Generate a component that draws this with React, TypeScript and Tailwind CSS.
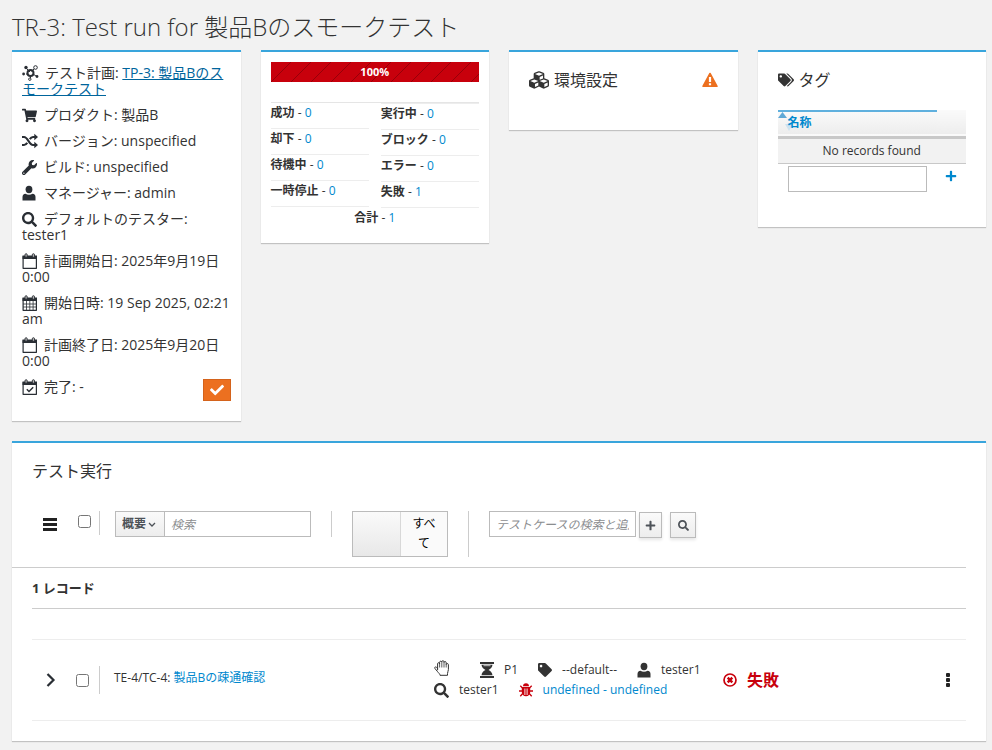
import { useState } from "react";
import type { ReactNode } from "react";
import { FaCheck, FaCubes, FaPlus, FaSearch, FaShoppingCart, FaTag, FaTags, FaWrench } from "react-icons/fa";

function PlanIcon() {
  return (
    <svg viewBox="0 0 17 16" className="h-4 w-[17px]" aria-hidden="true">
      <path d="M5 4 8 7M12 4 9.500 6.500M4 9h2M11 9l3 2M8.500 11v2" stroke="currentColor" strokeWidth="1" />
      <circle cx="8.500" cy="8" r="3" fill="none" stroke="currentColor" strokeWidth="2" />
      <circle cx="4" cy="2.500" r="1.700" fill="currentColor" />
      <circle cx="13.500" cy="2.500" r="1.800" fill="none" stroke="currentColor" />
      <circle cx="1.600" cy="9" r="1.400" fill="currentColor" />
      <circle cx="15" cy="11.500" r="1.400" fill="currentColor" />
      <circle cx="7.800" cy="14.200" r="1.200" fill="none" stroke="currentColor" />
    </svg>
  );
}

function ShuffleIcon() {
  return (
    <svg viewBox="0 0 16 16" className="h-4 w-4" aria-hidden="true">
      <path
        d="M0 4h2c4 0 5 8 9 8h2M0 12h2c1.500 0 2.500-1 3.200-2.200M7.800 6.200C8.600 5 9.500 4 11 4h2"
        fill="none"
        stroke="currentColor"
        strokeWidth="2.200"
      />
      <path d="M12.300.8 16 4l-3.700 3.200zM12.300 8.800 16 12l-3.700 3.200z" fill="currentColor" />
    </svg>
  );
}

function UserIcon() {
  return (
    <svg viewBox="0 0 14 16" className="h-4 w-[14px]" aria-hidden="true">
      <ellipse cx="7" cy="4.500" rx="3.400" ry="3.700" fill="currentColor" />
      <path d="M.5 15.500V12c0-2 1-3 3-3.200C4.500 9.400 5.600 9.700 7 9.700s2.500-.3 3.500-.9c2 .2 3 1.200 3 3.200v3.500z" fill="currentColor" />
    </svg>
  );
}

function CalendarIcon({ kind }: { kind: "blank" | "grid" | "check" }) {
  return (
    <svg viewBox="0 0 16 16" className="h-4 w-4" aria-hidden="true">
      <path d="M1.100 3.500h13.300v11.800H1.100z" fill="none" stroke="currentColor" strokeWidth="1.200" strokeLinejoin="round" />
      <path d="M.5 2.500H15V6H.5z" fill="currentColor" />
      <rect x="3" y=".7" width="2.200" height="3.600" rx="1.100" fill="#bbb" stroke="currentColor" strokeWidth=".9" />
      <rect x="10.300" y=".7" width="2.200" height="3.600" rx="1.100" fill="#bbb" stroke="currentColor" strokeWidth=".9" />
      {kind === "grid" && (
        <path d="M4.500 6v9M7.800 6v9M11.100 6v9M1 9h13M1 12h13" stroke="currentColor" strokeWidth=".8" />
      )}
      {kind === "check" && <path d="m4.800 10.300 2.200 2.200 4.200-4.300" fill="none" stroke="currentColor" strokeWidth="1.400" />}
    </svg>
  );
}

function HandIcon() {
  return (
    <svg viewBox="0 0 16 16" className="h-4 w-4 shrink-0" aria-hidden="true">
      <path
        d="M3.600 10.200V3.800c0-1.500 2-1.500 2 0V2.300c0-1.500 2.200-1.500 2.200 0v-.5c0-1.500 2.200-1.500 2.200 0v.8c0-1.400 2.200-1.400 2.200 0v2c0-1.400 2.200-1.400 2.200 0v5c0 1.500-.9 2.300-.9 4v1.700H6c0-1.500-1.500-2.300-2.400-3.600L1 8.600C0 7.200 1.700 6.300 2.700 7.500l.9 1.200"
        fill="none"
        stroke="currentColor"
        strokeWidth="1"
      />
      <path d="M5.600 3.500v4M7.800 2.500v5M10 2.800v4.700M12.200 4.500v3" stroke="currentColor" strokeWidth=".8" />
    </svg>
  );
}

function HourglassIcon() {
  return (
    <svg viewBox="0 0 14 16" className="h-4 w-[14px]" aria-hidden="true">
      <path d="M0 0h14v2H0zM0 14h14v2H0zM1.500 2.800h11C12.300 5.500 10.500 7 8.500 8c2 1 3.800 2.500 4 5.300h-11C1.700 10.500 3.500 9 5.500 8c-2-1-3.800-2.500-4-5.200z" fill="currentColor" />
      <path d="M3.500 3.700h7" stroke="#fff" strokeWidth=".7" />
    </svg>
  );
}

function BugIcon() {
  return (
    <svg viewBox="0 0 14 14" className="h-[14px] w-[14px]" aria-hidden="true">
      <path d="M4 3.300C4 1.500 5.200.3 7 .3s3 1.200 3 3z" fill="currentColor" />
      <path d="M2.800 4h8.400v5c0 2.400-1.700 4.200-4.200 4.200S2.800 11.400 2.800 9z" fill="currentColor" />
      <path d="M3.500 5 1.300 2.800M10.500 5l2.200-2.200M0 8h3.500M10.500 8H14M3.700 10.500l-2.400 2.700M10.300 10.500l2.400 2.700" stroke="currentColor" strokeWidth="1.300" />
      <path d="M5.900 5.500v6.500M8.100 5.500v6.500" stroke="#fff" strokeWidth=".9" />
    </svg>
  );
}

function WarningIcon() {
  return (
    <svg viewBox="0 0 16 16" className="h-4 w-4" aria-hidden="true">
      <path d="M8 1.500 15 14.300H1z" fill="currentColor" stroke="currentColor" strokeWidth="1.600" strokeLinejoin="round" />
      <path d="M6.900 5h2.200v5H6.900zM6.900 11.200h2.200v2H6.900z" fill="#fff" />
    </svg>
  );
}

function FailedIcon() {
  return (
    <svg viewBox="0 0 14 14" className="h-[14px] w-[14px]" aria-hidden="true">
      <circle cx="7" cy="7" r="6" fill="none" stroke="currentColor" strokeWidth="1.700" />
      <path d="m4.700 4.700 4.600 4.600M9.300 4.700 4.700 9.300" stroke="currentColor" strokeWidth="2.400" />
    </svg>
  );
}

const card = "border-t-2 border-[#39a5dc] bg-white shadow-[0_1px_1px_rgba(3,3,3,0.2)]";
const field = "h-[26px] border border-[#bbb] bg-white px-[6px] text-[12px] placeholder:italic placeholder:text-[#8b8d8f] outline-none";
const smallButton =
  "flex h-[26px] items-center justify-center border border-[#bbb] bg-linear-to-b from-[#fafafa] to-[#ededed] text-[#4d5258] shadow-[0_2px_3px_rgba(3,3,3,0.1)]";

function Info({ icon, children }: { icon: ReactNode; children: ReactNode }) {
  return (
    <p>
      <span className="mr-[6px] inline-flex h-4 min-w-4 items-center align-top text-[15px] text-[#292e34]">{icon}</span>
      {children}
    </p>
  );
}

function Stat({ label, value }: { label: string; value: number }) {
  return (
    <li className="h-[26px] border-b border-[#ededed] text-[12px] leading-5">
      <b className="font-bold">{label}</b> -{" "}
      <a href="#stats" className="text-[#0088ce]">
        {value}
      </a>
    </li>
  );
}

function Meta({ icon, children }: { icon: ReactNode; children?: ReactNode }) {
  return (
    <span className="flex items-center gap-[10px]">
      <span className="flex min-w-[14px] justify-center text-[14px]">{icon}</span>
      {children}
    </span>
  );
}

export default function App() {
  const [all, setAll] = useState(true);
  return (
    <div className="min-h-screen bg-[#f2f2f2] pt-[9px] pr-[6px] pb-2 pl-3 font-['Open_Sans','Noto_Sans_CJK_JP',sans-serif] text-[12px] text-[#333]">
      <h1 className="mb-[5px] text-[24px] leading-9 font-light">TR-3: Test run for 製品Bのスモークテスト</h1>

      <div className="grid grid-cols-4 items-start gap-5">
        <section className={card + " flex flex-col gap-[10px] px-[10px] pt-[13px] pb-5 text-[14px] leading-4"}>
          <Info icon={<PlanIcon />}>
            テスト計画:{" "}
            <a href="#plan" className="text-[#00659c] underline">
              TP-3: 製品Bのスモークテスト
            </a>
          </Info>
          <Info icon={<FaShoppingCart />}>プロダクト: 製品B</Info>
          <Info icon={<ShuffleIcon />}>バージョン: unspecified</Info>
          <Info icon={<FaWrench />}>ビルド: unspecified</Info>
          <Info icon={<UserIcon />}>マネージャー: admin</Info>
          <Info icon={<FaSearch />}>デフォルトのテスター: tester1</Info>
          <Info icon={<CalendarIcon kind="blank" />}>計画開始日: 2025年9月19日 0:00</Info>
          <Info icon={<CalendarIcon kind="grid" />}>開始日時: 19 Sep 2025, 02:21 am</Info>
          <Info icon={<CalendarIcon kind="blank" />}>計画終了日: 2025年9月20日 0:00</Info>
          <div className="flex justify-between">
            <Info icon={<CalendarIcon kind="check" />}>完了: -</Info>
            <button aria-label="完了" className="flex h-[22px] w-7 items-center justify-center border border-[#d4631c] bg-[#ec7020] text-[14px] text-white">
              <FaCheck />
            </button>
          </div>
        </section>

        <section className={card + " px-[10px] pt-[10px] pb-[10px]"}>
          <div className="relative mb-5 h-5 bg-[#c8000c] text-center text-[11px] leading-5 font-bold text-white">
            <svg className="absolute inset-0 h-full w-full" aria-hidden="true">
              <defs>
                <pattern id="stripes" width="20" height="20" patternUnits="userSpaceOnUse">
                  <path d="M-1 21 21-1" stroke="#970008" strokeWidth="1" />
                </pattern>
              </defs>
              <rect width="100%" height="100%" fill="url(#stripes)" />
            </svg>
            <span className="relative">100%</span>
          </div>
          <div className="grid grid-cols-2 gap-3 border-t border-[#e5e5e5]">
            <ul>
              <Stat label="成功" value={0} />
              <Stat label="却下" value={0} />
              <Stat label="待機中" value={0} />
              <Stat label="一時停止" value={0} />
            </ul>
            <ul className="border-t border-[#ededed]">
              <Stat label="実行中" value={0} />
              <Stat label="ブロック" value={0} />
              <Stat label="エラー" value={0} />
              <Stat label="失敗" value={1} />
            </ul>
          </div>
          <p className="h-[25px] text-center leading-5">
            <b>合計</b> -{" "}
            <a href="#stats" className="text-[#0088ce]">
              1
            </a>
          </p>
        </section>

        <section className={card + " flex h-20 items-start justify-between px-5 pt-[18px]"}>
          <h2 className="flex items-center gap-[5px] text-[16px] leading-5">
            <FaCubes className="h-5 w-5" />
            環境設定
          </h2>
          <span className="pt-[2px] text-[#ec7020]">
            <WarningIcon />
          </span>
        </section>

        <section className={card + " px-5 pt-[18px] pb-[35px]"}>
          <h2 className="mb-5 flex items-center gap-[5px] text-[16px] leading-5">
            <FaTags />
            タグ
          </h2>
          <table className="w-full table-fixed border-collapse">
            <thead>
              <tr className="h-[27px] border-b-3 border-[#c8c8c8] bg-linear-to-b from-[#fafafa] to-[#ededed]">
                <th className="relative p-0 pl-[10px] text-left align-middle text-[12px] leading-5 text-[#0088ce]">
                  <span className="absolute inset-x-0 top-0 h-[2px] bg-[#5fb0de]" />
                  <svg viewBox="0 0 16 19" className="absolute top-[2px] left-0 h-[19px] w-4" aria-hidden="true">
                    <path d="M0 6h9L4.500 0z" fill="#5fa8d6" />
                    <path d="M7 12h8l-4 7z" fill="#cde3f0" />
                  </svg>
                  <span className="relative">名称</span>
                </th>
                <th className="w-[29px]" aria-label="操作" />
              </tr>
            </thead>
            <tbody>
              <tr className="h-[26px] border-b border-[#c8c8c8] bg-[#f2f2f2]">
                <td colSpan={2} className="p-0 text-center leading-4">
                  No records found
                </td>
              </tr>
            </tbody>
          </table>
          <div className="mt-[2px] flex items-start pr-[9px] pl-[10px]">
            <input aria-label="タグ" className={field + " min-w-0 flex-1"} />
            <button aria-label="タグを追加" className="mt-1 ml-[18px] text-[12px] text-[#0088ce]">
              <FaPlus />
            </button>
          </div>
        </section>
      </div>

      <section className={card + " mt-5 pb-5"}>
        <h2 className="px-5 pt-[18px] text-[16px] leading-5">テスト実行</h2>

        <div className="mr-5 flex h-[87px] items-start border-b border-[#ccc] pt-[30px] pl-[31px]">
          <button aria-label="メニュー" className="mt-[6px] flex w-[14px] flex-col gap-[2px] pt-px">
            <span className="h-[3px] w-full bg-[#222]" />
            <span className="h-[3px] w-full bg-[#222]" />
            <span className="h-[3px] w-full bg-[#222]" />
          </button>
          <input type="checkbox" aria-label="すべて選択" className="mt-1 ml-[21px] h-[13px] w-[13px]" />
          <div className="ml-2 h-6 w-px bg-[#ccc]" />

          <div className="ml-[15px] flex">
            <div className="relative">
              <select
                aria-label="検索項目"
                className="h-[26px] w-[50px] appearance-none border border-[#bbb] bg-linear-to-b from-[#fafafa] to-[#ededed] pl-[6px] text-[12px] font-semibold text-[#4d5258]"
              >
                <option>概要</option>
              </select>
              <svg viewBox="0 0 8 6" className="pointer-events-none absolute top-[11px] right-[9px] h-[6px] w-2" aria-hidden="true">
                <path d="m1 1 3 3 3-3" fill="none" stroke="#4d5258" strokeWidth="1.300" />
              </svg>
            </div>
            <input aria-label="検索" placeholder="検索" className={field + " -ml-px w-[147px]"} />
          </div>

          <div className="ml-5 h-[26px] w-px bg-[#ccc]" />
          <button
            role="switch"
            aria-checked={all}
            onClick={() => setAll(!all)}
            className="ml-5 flex h-[46px] w-24 border border-[#bbb] bg-[#fafafa] text-[12px] leading-5 text-black"
          >
            <span className="h-full w-12 border-r border-[#d8d8d8] bg-linear-to-b from-[#fafafa] to-[#e8e8e8]" />
            <span className="flex-1 px-2 pt-[2px]">すべて</span>
          </button>
          <div className="ml-5 h-[46px] w-px bg-[#ccc]" />

          <input aria-label="テストケースの検索と追加" placeholder="テストケースの検索と追加" className={field + " ml-5 w-[147px]"} />
          <button aria-label="追加" className={smallButton + " mt-px ml-[3px] w-[23px] text-[11px]"}>
            <FaPlus />
          </button>
          <button aria-label="検索" className={smallButton + " mt-px ml-2 w-[26px] text-[11px]"}>
            <FaSearch />
          </button>
        </div>

        <div className="mx-5">
          <h3 className="h-[41px] border-b border-[#ccc] text-[13px] leading-10 font-bold">1 レコード</h3>
          <div className="mt-[30px] flex h-[82px] items-center border-y border-[#ededed] pl-[14px]">
            <button aria-label="展開">
              <svg viewBox="0 0 10 14" className="h-[14px] w-[10px]" aria-hidden="true">
                <path d="m1.500 1 6 6-6 6" fill="none" stroke="#292e34" strokeWidth="2.200" />
              </svg>
            </button>
            <input type="checkbox" aria-label="TE-4を選択" className="ml-5 h-[13px] w-[13px]" />
            <div className="ml-[10px] h-7 w-px bg-[#ccc]" />
            <p className="ml-[14px] w-80 pb-1">
              TE-4/TC-4:{" "}
              <a href="#case" className="text-[#0088ce]">
                製品Bの疎通確認
              </a>
            </p>
            <div className="w-[289px] leading-5">
              <div className="flex gap-5">
                <span className="w-[26px]">
                  <Meta icon={<HandIcon />} />
                </span>
                <Meta icon={<HourglassIcon />}>P1</Meta>
                <Meta icon={<FaTag />}>--default--</Meta>
                <Meta icon={<UserIcon />}>tester1</Meta>
              </div>
              <div className="flex gap-5">
                <Meta icon={<FaSearch className="h-[15px] w-[15px]" />}>tester1</Meta>
                <Meta icon={<span className="text-[#c8000c]"><BugIcon /></span>}>
                  <a href="#bug" className="text-[#0088ce]">
                    undefined - undefined
                  </a>
                </Meta>
              </div>
            </div>
            <div className="flex items-center gap-[10px] text-[16px] font-bold text-[#c8000c]">
              <FailedIcon />
              失敗
            </div>
            <button aria-label="操作" className="mr-4 ml-auto flex flex-col gap-px">
              <span className="h-1 w-1 rounded-[1px] bg-[#222]" />
              <span className="h-1 w-1 rounded-[1px] bg-[#222]" />
              <span className="h-1 w-1 rounded-[1px] bg-[#222]" />
            </button>
          </div>
        </div>
      </section>
    </div>
  );
}
